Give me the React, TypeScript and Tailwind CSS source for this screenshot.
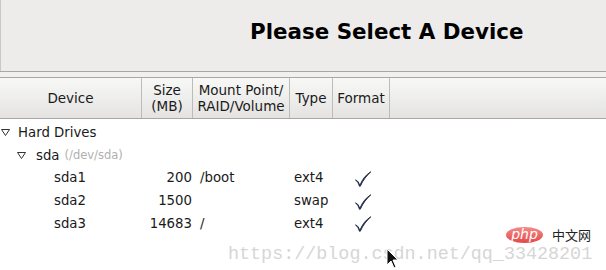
import React from "react";

const Check = () => (
  <svg width="18" height="18" viewBox="0 0 18 18" className="block">
    <path d="M1.5 10 C3.5 10.3 4.8 12.5 5.8 15.5 C8.5 9 12 4.8 16.8 1.8 C12.5 5.8 9 10 6.3 16.2 L5.4 16.2 C4.6 13.5 3.4 11.2 1.5 10 Z" fill="#263049" stroke="#263049" strokeWidth="1" strokeLinejoin="round" />
  </svg>
);

const Tri = () => (
  <svg width="9" height="7" viewBox="0 0 9 7" className="block">
    <path d="M0.5 0.5 H8.5 L4.5 6.5 Z" fill="none" stroke="#333" strokeWidth="1" />
  </svg>
);

const rows = [
  { name: "sda1", size: "200", mount: "/boot", type: "ext4" },
  { name: "sda2", size: "1500", mount: "", type: "swap" },
  { name: "sda3", size: "14683", mount: "/", type: "ext4" },
];

export default function App() {
  return (
    <div
      className="relative w-[606px] h-[270px] overflow-hidden bg-white text-[13.3px] text-[#1a1a1a]"
      style={{ fontFamily: '"DejaVu Sans", sans-serif' }}
    >
      <div className="h-[71px] bg-[#edeceb] border-l border-[#c9c8c7] pl-[249px] pt-[19px]">
        <div className="text-[21.4px] font-bold leading-[26px] text-[#000]">Please Select A Device</div>
      </div>
      <div className="h-[6px] bg-[#f1f0ef] border-t border-[#a8a7a6]" />
      <div className="flex h-[42px] border-y border-[#a8a7a6] bg-gradient-to-b from-[#f8f8f7] to-[#e4e3e2] leading-[16px] text-[13.5px]">
        <div className="w-[142px] flex items-center justify-center border-r border-[#bdbcbb]">Device</div>
        <div className="w-[51px] flex items-center justify-center text-center border-r border-[#bdbcbb]">
          Size<br />(MB)
        </div>
        <div className="w-[97px] flex items-center justify-center text-center border-r border-[#bdbcbb]">
          Mount Point/<br />RAID/Volume
        </div>
        <div className="w-[43px] flex items-center justify-center border-r border-[#bdbcbb]">Type</div>
        <div className="w-[57px] flex items-center justify-center border-r border-[#bdbcbb]">Format</div>
        <div className="flex-1" />
      </div>
      <div className="pt-[2px]">
        <div className="flex items-center h-[23px]">
          <div className="pl-[1px] w-[18px]"><Tri /></div>
          <span>Hard Drives</span>
        </div>
        <div className="flex items-center h-[23px]">
          <div className="pl-[17px] w-[36px]"><Tri /></div>
          <span>sda</span>
          <span className="ml-[5px] text-[11.5px] text-[#b0b0b0]">(/dev/sda)</span>
        </div>
        {rows.map((r) => (
          <div key={r.name} className="flex items-center h-[22.7px]">
            <div className="w-[142px] pl-[54px]">{r.name}</div>
            <div className="w-[50px] text-right">{r.size}</div>
            <div className="w-[99px] pl-[8px]">{r.mount}</div>
            <div className="w-[63px] pl-[3px]">{r.type}</div>
            <div className="pt-[1px]"><Check /></div>
          </div>
        ))}
      </div>
      <div
        className="absolute left-[228px] top-[245px] text-[18.4px] leading-[20px] text-[#d6d6d6]"
        style={{ fontFamily: '"Liberation Mono", monospace' }}
      >
        https://blog.csdn.net/qq_33428201
      </div>
      <div className="absolute left-[506px] top-[227px] flex items-center">
        <div className="w-[37px] h-[16px] rounded-[50%] bg-gradient-to-b from-[#f48a8a] to-[#e04848] flex items-center justify-center text-white italic text-[14px] leading-[14px] pb-[2px]">
          php
        </div>
        <span
          className="ml-[9px] text-[13px] leading-[16px] text-[#222]"
          style={{ fontFamily: '"Noto Sans CJK SC", sans-serif' }}
        >
          中文网
        </span>
      </div>
      <svg className="absolute left-[386px] top-[248px]" width="14" height="22" viewBox="0 0 14 22">
        <path d="M1 1 L1 17 L5 13 L8 20 L10 19 L7 12 L12 12 Z" fill="#111" stroke="#fff" strokeWidth="1" />
      </svg>
    </div>
  );
}
